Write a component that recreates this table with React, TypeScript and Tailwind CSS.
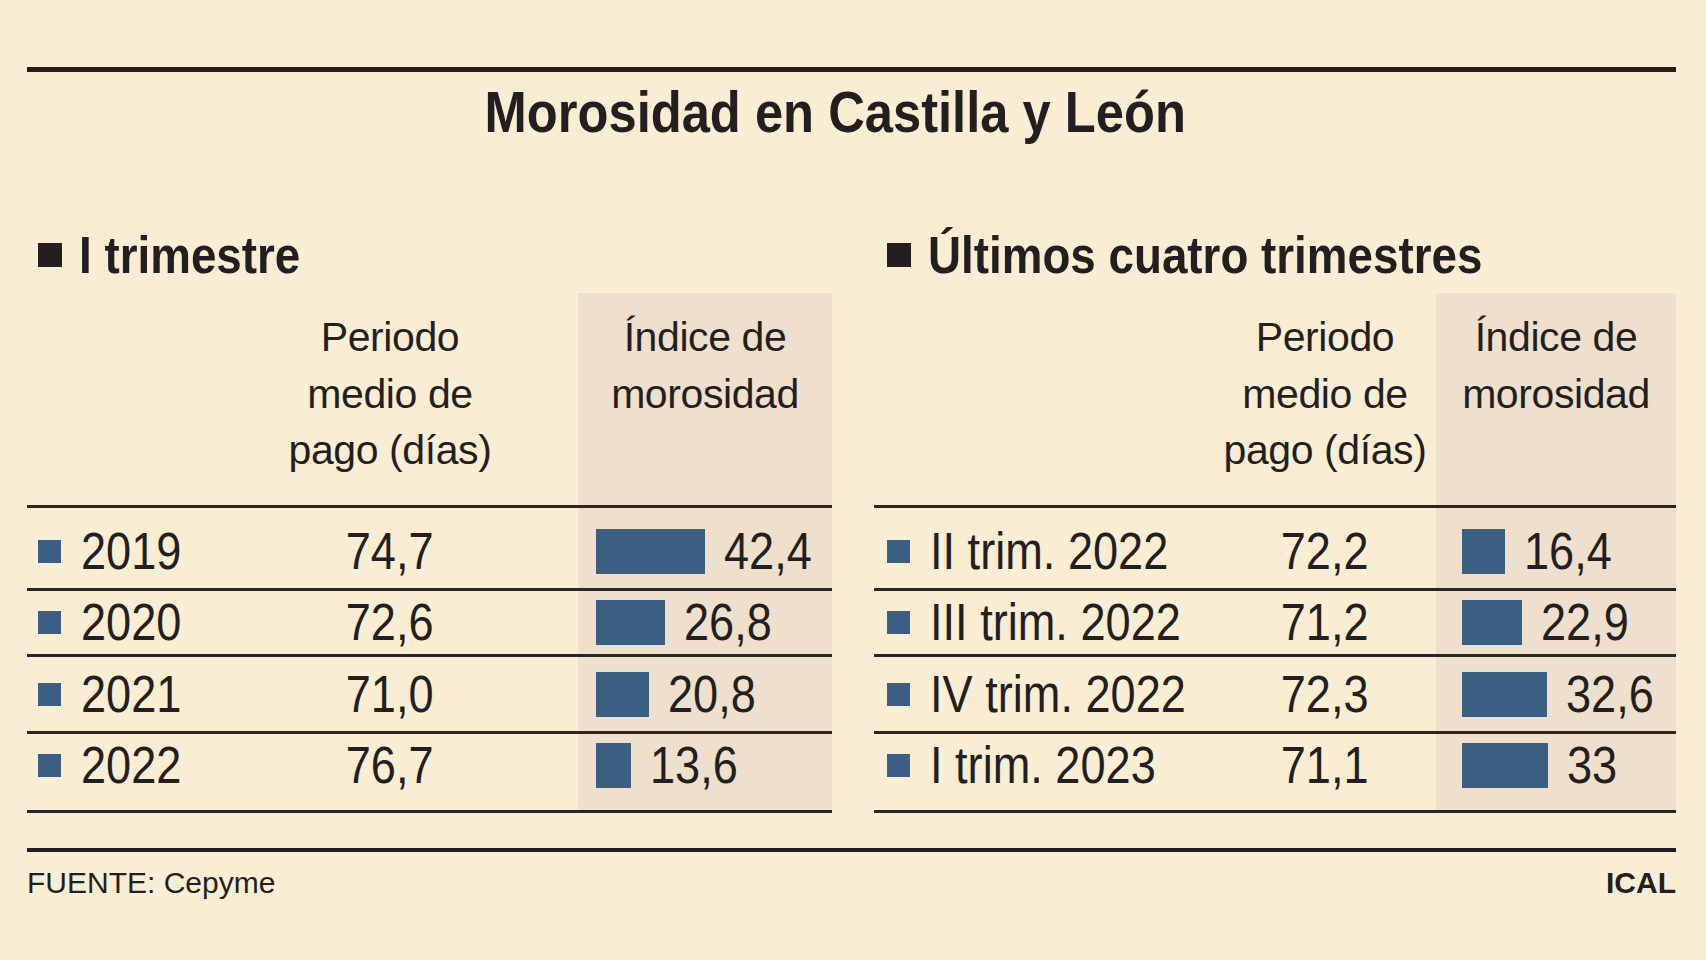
type Row = { label: string; pmp: string; idx: number; txt: string };

const leftRows: Row[] = [
  { label: "2019", pmp: "74,7", idx: 42.4, txt: "42,4" },
  { label: "2020", pmp: "72,6", idx: 26.8, txt: "26,8" },
  { label: "2021", pmp: "71,0", idx: 20.8, txt: "20,8" },
  { label: "2022", pmp: "76,7", idx: 13.6, txt: "13,6" },
];

const rightRows: Row[] = [
  { label: "II trim. 2022", pmp: "72,2", idx: 16.4, txt: "16,4" },
  { label: "III trim. 2022", pmp: "71,2", idx: 22.9, txt: "22,9" },
  { label: "IV trim. 2022", pmp: "72,3", idx: 32.6, txt: "32,6" },
  { label: "I trim. 2023", pmp: "71,1", idx: 33, txt: "33" },
];

// row heights (border included) and vertical nudges, measured from the print
const rowBox = [
  { h: "h-[83px]", pad: "pt-[6px]" },
  { h: "h-[66px]", pad: "" },
  { h: "h-[77px]", pad: "" },
  { h: "h-[79px]", pad: "pb-[13px]" },
];

type TableProps = {
  heading: string;
  rows: Row[];
  scale: number;
  labelCol: string;
  pmpCol: string;
  shadeCol: string;
  bulletPad: string;
  barPad: string;
};

// the print uses a condensed grotesque; squeeze Liberation Sans to match
const narrow = "inline-block whitespace-nowrap scale-x-[0.885]";

function Table({ heading, rows, scale, labelCol, pmpCol, shadeCol, bulletPad, barPad }: TableProps) {
  return (
    <div>
      {/* section heading */}
      <div className={`h-[52px] mb-[12px] flex items-center ${bulletPad}`}>
        <div className="w-[24px] h-[24px] bg-[#231f20] shrink-0" />
        <span className="ml-[17px] inline-block whitespace-nowrap origin-left scale-x-[0.88] text-[52px] leading-none font-bold">
          {heading}
        </span>
      </div>

      {/* column headers */}
      <div className="flex h-[215px] border-b-[3px] border-[#2b2624] text-[41px] leading-[56.5px] tracking-[-0.01em] text-center">
        <div className={labelCol} />
        <div className={`${pmpCol} pt-[16px]`}>
          Periodo
          <br />
          medio de
          <br />
          pago (días)
        </div>
        <div className={`${shadeCol} bg-[#eee0cd] pt-[16px]`}>
          Índice de
          <br />
          morosidad
        </div>
      </div>

      {/* data rows */}
      {rows.map((r, i) => (
        <div key={r.label} className={`flex ${rowBox[i].h} border-b-[3px] border-[#2b2624] text-[51px] leading-none`}>
          <div className={`${labelCol} ${bulletPad} ${rowBox[i].pad} flex items-center`}>
            <div className="w-[23px] h-[23px] bg-[#3a5f82] shrink-0" />
            <span className={`ml-[20px] origin-left ${narrow}`}>{r.label}</span>
          </div>
          <div className={`${pmpCol} ${rowBox[i].pad} flex items-center justify-center`}>
            <span className={narrow}>{r.pmp}</span>
          </div>
          <div className={`${shadeCol} ${barPad} ${rowBox[i].pad} bg-[#eee0cd] flex items-center`}>
            <div className="h-[45px] bg-[#3a5f82] shrink-0" style={{ width: `${r.idx * scale}px` }} />
            <span className={`ml-[19px] origin-left ${narrow}`}>{r.txt}</span>
          </div>
        </div>
      ))}
    </div>
  );
}

export default function App() {
  return (
    <div className="w-[1706px] h-[960px] overflow-hidden bg-[#f9edd3] text-[#231f20] font-['Liberation_Sans',Arial,sans-serif]">
      <div className="pt-[67px] pl-[27px] pr-[30px]">
        <div className="h-[5px] bg-[#231f20]" />

        <h1 className="mt-[11px] pr-[32px] text-center text-[58px] leading-none font-bold">
          <span className="inline-block whitespace-nowrap scale-x-[0.874]">Morosidad en Castilla y León</span>
        </h1>

        <div className="mt-[88px] grid grid-cols-[805px_802px] gap-x-[42px]">
          <Table
            heading="I trimestre"
            rows={leftRows}
            scale={2.57}
            labelCol="w-[175px]"
            pmpCol="w-[376px]"
            shadeCol="w-[254px]"
            bulletPad="pl-[11px]"
            barPad="pl-[18px]"
          />
          <Table
            heading="Últimos cuatro trimestres"
            rows={rightRows}
            scale={2.62}
            labelCol="w-[340px]"
            pmpCol="w-[222px]"
            shadeCol="w-[240px]"
            bulletPad="pl-[13px]"
            barPad="pl-[26px]"
          />
        </div>

        {/* footer */}
        <div className="mt-[35px] h-[4px] bg-[#231f20]" />
        <div className="mt-[16px] flex justify-between text-[30px] leading-none">
          <span>FUENTE: Cepyme</span>
          <span className="font-bold">ICAL</span>
        </div>
      </div>
    </div>
  );
}
